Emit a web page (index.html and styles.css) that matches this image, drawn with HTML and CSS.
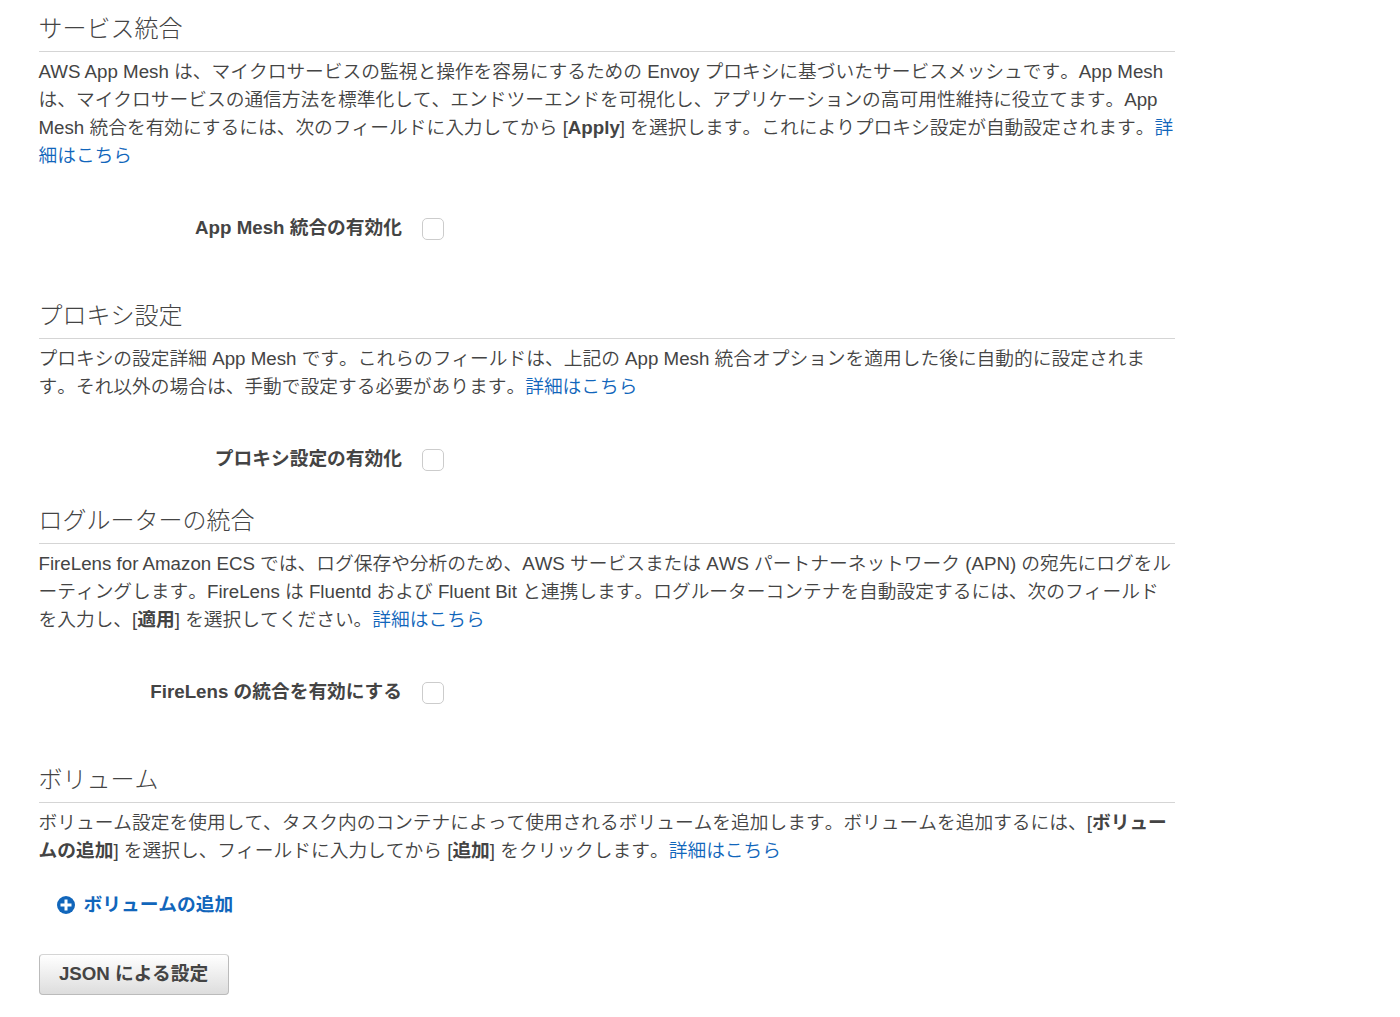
FILE: index.html
```
<!DOCTYPE html>
<html lang="ja">
<head>
    <meta charset="UTF-8">
    <meta name="viewport" content="width=device-width, initial-scale=1.0">
    <title>タスク定義</title>
    <link rel="stylesheet" href="styles.css">
</head>
<body>
    <div class="container">
        <section class="section">
            <h2 class="title">サービス統合</h2>
            <p class="description">
                <span class="latin">AWS App Mesh</span> は、マイクロサービスの監視と操作を容易にするための Envoy プロキシに基づいたサービスメッシュです。App Mesh<br>
                は、マイクロサービスの通信方法を標準化して、エンドツーエンドを可視化し、アプリケーションの高可用性維持に役立てます。App<br>
                Mesh 統合を有効にするには、次のフィールドに入力してから [<strong>Apply</strong>] を選択します。これによりプロキシ設定が自動設定されます。<a href="#">詳<br>細はこちら</a>
            </p>
            <div class="field">
                <label class="field-label" for="app-mesh">App Mesh 統合の有効化</label>
                <input type="checkbox" class="checkbox" id="app-mesh">
            </div>
        </section>

        <section class="section section-compact">
            <h2 class="title">プロキシ設定</h2>
            <p class="description">
                プロキシの設定詳細 App Mesh です。これらのフィールドは、上記の App Mesh 統合オプションを適用した後に自動的に設定されま<br>す。それ以外の場合は、手動で設定する必要があります。<a href="#">詳細はこちら</a>
            </p>
            <div class="field">
                <label class="field-label" for="proxy">プロキシ設定の有効化</label>
                <input type="checkbox" class="checkbox" id="proxy">
            </div>
        </section>

        <section class="section">
            <h2 class="title">ログルーターの統合</h2>
            <p class="description">
                <span class="latin">FireLens for Amazon ECS</span> では、ログ保存や分析のため、AWS サービスまたは AWS パートナーネットワーク (APN) の宛先にログをル<br>ーティングします。FireLens は Fluentd および Fluent Bit と連携します。ログルーターコンテナを自動設定するには、次のフィールド<br>を入力し、[<strong>適用</strong>] を選択してください。<a href="#">詳細はこちら</a>
            </p>
            <div class="field">
                <label class="field-label" for="firelens">FireLens の統合を有効にする</label>
                <input type="checkbox" class="checkbox" id="firelens">
            </div>
        </section>

        <section class="section">
            <h2 class="title">ボリューム</h2>
            <p class="description">
                ボリューム設定を使用して、タスク内のコンテナによって使用されるボリュームを追加します。ボリュームを追加するには、[<strong>ボリュー<br>ムの追加</strong>] を選択し、フィールドに入力してから [<strong>追加</strong>] をクリックします。<a href="#">詳細はこちら</a>
            </p>
            <a class="add-link" href="#">
                <svg class="add-icon" viewBox="0 0 18 18">
                    <circle cx="9" cy="9" r="9" fill="currentColor"/>
                    <path d="M9 3.5v11M3.5 9h11" stroke="#fff" stroke-width="3"/>
                </svg>
                ボリュームの追加
            </a>
        </section>

        <button type="button" class="btn">JSON による設定</button>
    </div>
</body>
</html>
```
FILE: styles.css
```
:root {
    --text-color: #444444;
    --link-color: #1166bb;
    --border-color: #d5d5d5;
}

* {
    margin: 0;
    padding: 0;
    box-sizing: border-box;
    font-family: "Liberation Sans", "Noto Sans CJK JP", sans-serif;
}

body {
    background-color: #ffffff;
    color: var(--text-color);
    font-size: 18.73px;
    font-weight: 350;
    font-kerning: none;
    line-height: 28px;
}

a {
    color: var(--link-color);
    text-decoration: none;
}

strong {
    font-weight: 700;
}

.latin {
    font-kerning: normal;
}

.container {
    width: 1136.5px;
    margin-left: 38.5px;
    padding-top: 4px;
}

.section {
    margin-bottom: 51px;
}

.section-compact {
    margin-bottom: 25px;
}

.section:last-of-type {
    margin-bottom: 35px;
}

.title {
    height: 48px;
    margin-bottom: 6px;
    border-bottom: 1px solid var(--border-color);
    font-size: 24px;
    font-weight: 300;
    line-height: 49px;
}

.description {
    white-space: nowrap;
}

.field {
    display: flex;
    align-items: center;
    gap: 20px;
    height: 22px;
    margin-top: 48px;
}

.field-label {
    width: 363.5px;
    padding-bottom: 2px;
    font-weight: 700;
    text-align: right;
    white-space: nowrap;
}

.checkbox {
    appearance: none;
    width: 22px;
    height: 22px;
    border: 1px solid #cccccc;
    border-radius: 5px;
    background-color: #ffffff;
}

.add-link {
    display: flex;
    align-items: center;
    gap: 9px;
    margin-top: 26px;
    padding-left: 18px;
    font-weight: 700;
}

.add-icon {
    width: 18px;
    height: 18px;
}

.btn {
    display: block;
    width: 190px;
    height: 41px;
    padding-bottom: 6px;
    border: 1px solid #bbbbbb;
    border-top-color: #d5d5d5;
    border-radius: 4px;
    background: linear-gradient(#ffffff, #dddddd);
    color: var(--text-color);
    font-size: 18.73px;
    font-weight: 700;
    cursor: pointer;
}
```
